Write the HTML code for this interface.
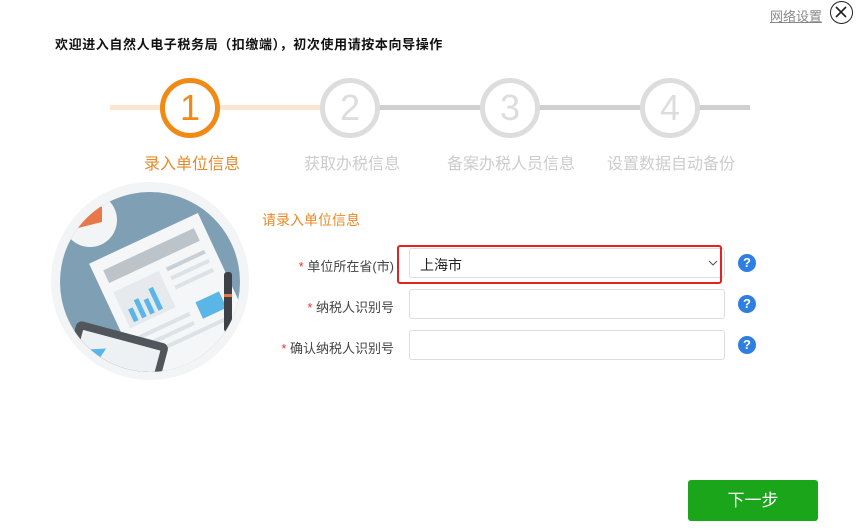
<!DOCTYPE html>
<html><head><meta charset="utf-8"><style>
*{margin:0;padding:0;box-sizing:border-box}
body{width:859px;height:532px;background:#fff;position:relative;overflow:hidden;font-family:"Liberation Sans","Noto Sans CJK SC",sans-serif}
.a{position:absolute}
.title{left:55px;top:34px;font-size:13px;font-weight:bold;color:#111;letter-spacing:0.6px}
.net{left:770px;top:6px;font-size:13px;color:#888;text-decoration:underline}
.close{left:830px;top:1px;width:23px;height:23px;border:1.5px solid #222;border-radius:50%}
.line{top:105px;height:5px}
.circ{width:60px;height:60px;border-radius:50%;border:5px solid #ddd;background:#fff;color:#ddd;font-size:36px;text-align:center;line-height:50px;font-weight:300}
.lab{top:150px;font-size:16px;color:#ccc;white-space:nowrap}
.sub{left:262px;top:210px;font-size:14px;color:#e8892a}
.fl{font-size:13px;color:#444;text-align:right;width:140px;left:254px}
.fl b{color:#e33;font-weight:normal}
.inp{left:409px;width:316px;height:30px;border:1px solid #ddd;border-radius:3px;background:#fff}
.q{left:738px;width:18px;height:18px;border-radius:50%;background:#2f7fe0;color:#fff;font-weight:bold;font-size:13px;text-align:center;line-height:18px}
.btn{left:688px;top:480px;width:130px;height:41px;background:#1aa51a;border-radius:3px;color:#fff;font-size:17px;text-align:center;line-height:41px}
</style></head><body>
<div class="a net">网络设置</div>
<div class="a close"><svg width="20" height="20" viewBox="0 0 20 20" style="position:absolute;left:0;top:0"><path d="M5 5L15 15M15 5L5 15" stroke="#222" stroke-width="1.6"/></svg></div>
<div class="a title">欢迎进入自然人电子税务局（扣缴端），初次使用请按本向导操作</div>

<div class="a line" style="left:110px;width:215px;background:#fde5d0"></div>
<div class="a line" style="left:325px;width:425px;background:#d0d0d0"></div>
<div class="a circ" style="left:160px;top:78px;border-color:#f08a14;color:#f08a14">1</div>
<div class="a circ" style="left:320px;top:78px">2</div>
<div class="a circ" style="left:480px;top:78px">3</div>
<div class="a circ" style="left:640px;top:78px">4</div>
<div class="a lab" style="left:144px;color:#e8892a">录入单位信息</div>
<div class="a lab" style="left:304px">获取办税信息</div>
<div class="a lab" style="left:447px">备案办税人员信息</div>
<div class="a lab" style="left:607px">设置数据自动备份</div>

<svg class="a" style="left:50px;top:182px" width="200" height="200" viewBox="0 0 200 200">
<defs><clipPath id="c"><circle cx="100" cy="100" r="90"/></clipPath></defs>
<circle cx="100" cy="99" r="99" fill="#f3f4f5"/>
<circle cx="100" cy="100" r="90" fill="#7f9fb4"/>
<g clip-path="url(#c)">
<circle cx="40" cy="38" r="27" fill="#f3f4f5"/>
<path d="M20 48 A22 22 0 0 1 52 25 L52 40 Z" fill="#e8784a"/>
<g transform="translate(14,14) rotate(-25 100 110)">
<rect x="50" y="40" width="120" height="150" fill="#f4f6f7"/>
<rect x="60" y="52" width="100" height="14" fill="#bcc3c9"/>
<rect x="60" y="76" width="50" height="40" fill="#e6eaed"/>
<rect x="66" y="98" width="5" height="14" fill="#5bb6e8"/><rect x="75" y="92" width="5" height="20" fill="#5bb6e8"/><rect x="84" y="96" width="5" height="16" fill="#5bb6e8"/><rect x="93" y="88" width="5" height="24" fill="#5bb6e8"/>
<rect x="118" y="76" width="42" height="4" fill="#c9d0d5"/><rect x="118" y="86" width="42" height="4" fill="#dde2e6"/><rect x="118" y="96" width="42" height="4" fill="#dde2e6"/>
<rect x="130" y="120" width="26" height="18" fill="#5bb6e8"/>
<rect x="60" y="126" width="60" height="4" fill="#dde2e6"/><rect x="60" y="136" width="60" height="4" fill="#dde2e6"/><rect x="60" y="146" width="90" height="4" fill="#dde2e6"/>
</g>
<rect x="174" y="90" width="8" height="60" rx="3" fill="#3c4248"/><rect x="174" y="112" width="8" height="3" fill="#e8784a"/>
<g transform="translate(8,10) rotate(15 60 170)"><rect x="10" y="140" width="95" height="70" rx="6" fill="#50565c"/><rect x="18" y="148" width="80" height="60" fill="#eef1f3"/><path d="M30 165 L45 160 L40 175Z" fill="#5bb6e8"/></g>
</g>
</svg>

<div class="a sub">请录入单位信息</div>
<div class="a fl" style="top:256px"><b>*</b> 单位所在省(市)</div>
<div class="a fl" style="top:297px"><b>*</b> 纳税人识别号</div>
<div class="a fl" style="top:338px"><b>*</b> 确认纳税人识别号</div>
<div class="a inp" style="top:248px"><span style="position:absolute;left:10px;top:6px;font-size:14px;color:#222">上海市</span>
<svg style="position:absolute;right:6px;top:11px" width="10" height="7"><path d="M1 1L5 5L9 1" stroke="#555" fill="none"/></svg></div>
<div class="a" style="left:397px;top:245px;width:325px;height:39px;border:2px solid #e52222;border-radius:3px"></div>
<div class="a inp" style="top:289px"></div>
<div class="a inp" style="top:330px"></div>
<div class="a q" style="top:254px">?</div>
<div class="a q" style="top:295px">?</div>
<div class="a q" style="top:336px">?</div>
<div class="a btn">下一步</div>
</body></html>
